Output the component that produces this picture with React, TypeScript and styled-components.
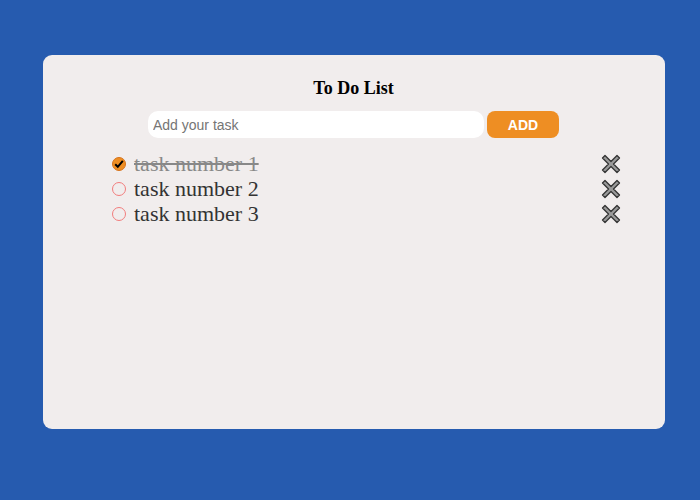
import React from "react";
import styled, { createGlobalStyle } from "styled-components";

const Global = createGlobalStyle`
  html, body { margin: 0; padding: 0; }
  body { background: #265baf; width: 700px; height: 500px; font-family: "Liberation Serif", serif; }
`;

const Page = styled.div`
  width: 700px;
  height: 500px;
  box-sizing: border-box;
  padding: 55px 35px 71px 43px;
`;

const Card = styled.div`
  width: 622px;
  height: 374px;
  background: #f1eded;
  border-radius: 9px;
  box-sizing: border-box;
  padding: 20px 45px 0 44px;
  display: flex;
  flex-direction: column;
`;

const Title = styled.h1`
  margin: 0;
  font-family: "Liberation Serif", serif;
  font-size: 18px;
  font-weight: bold;
  color: #000;
  text-align: center;
  line-height: 26px;
`;

const Form = styled.div`
  display: flex;
  justify-content: center;
  gap: 3px;
  margin-top: 10px;
`;

const Input = styled.input`
  width: 336px;
  height: 27px;
  box-sizing: border-box;
  border: none;
  border-radius: 10px;
  background: #fff;
  padding: 0 5px;
  font-family: "Liberation Sans", Arial, sans-serif;
  font-size: 14px;
  outline: none;
  &::placeholder { color: #757575; }
`;

const AddButton = styled.button`
  width: 72px;
  height: 27px;
  border: none;
  border-radius: 8px;
  background: #ee8e23;
  color: #fff;
  font-family: "Liberation Sans", Arial, sans-serif;
  font-weight: bold;
  font-size: 14px;
  padding: 0;
`;

const List = styled.ul`
  list-style: none;
  margin: 13px -1px 0 0;
  padding: 0 0 0 25px;
`;

const Row = styled.li`
  display: flex;
  align-items: center;
  height: 25px;
`;

const Check = styled.span<{ $done: boolean }>`
  width: 14px;
  height: 14px;
  box-sizing: border-box;
  border-radius: 50%;
  border: 1px solid ${(p) => (p.$done ? "#d6721a" : "#f27d7d")};
  background: ${(p) => (p.$done ? "#ee8e23" : "transparent")};
  display: flex;
  align-items: center;
  justify-content: center;
  flex-shrink: 0;
`;

const Label = styled.span<{ $done: boolean }>`
  margin-left: 8px;
  font-family: "Liberation Serif", serif;
  font-size: 22px;
  line-height: 25px;
  color: ${(p) => (p.$done ? "#888" : "#333")};
  text-decoration: ${(p) => (p.$done ? "line-through" : "none")};
  flex: 1;
`;

const Remove = styled.span`
  width: 20px;
  height: 20px;
  display: flex;
`;

const CrossIcon = () => (
  <svg width="20" height="20" viewBox="0 0 20 20">
    <path
      d="M4 1.5 L10 7.5 L16 1.5 L18.5 4 L12.5 10 L18.5 16 L16 18.5 L10 12.5 L4 18.5 L1.5 16 L7.5 10 L1.5 4 Z"
      fill="#9a9a9a"
      stroke="#333"
      strokeWidth="1.3"
      strokeLinejoin="round"
    />
  </svg>
);

const Tick = () => (
  <svg width="10" height="10" viewBox="0 0 10 10">
    <path d="M1.2 5.2 L3.8 7.8 L8.8 1.8" fill="none" stroke="#000" strokeWidth="2" />
  </svg>
);

const tasks = [
  { text: "task number 1", done: true },
  { text: "task number 2", done: false },
  { text: "task number 3", done: false },
];

export default function App() {
  return (
    <>
      <Global />
      <Page>
        <Card>
          <Title>To Do List</Title>
          <Form>
            <Input placeholder="Add your task" />
            <AddButton>ADD</AddButton>
          </Form>
          <List>
            {tasks.map((t) => (
              <Row key={t.text}>
                <Check $done={t.done}>{t.done && <Tick />}</Check>
                <Label $done={t.done}>{t.text}</Label>
                <Remove>
                  <CrossIcon />
                </Remove>
              </Row>
            ))}
          </List>
        </Card>
      </Page>
    </>
  );
}
